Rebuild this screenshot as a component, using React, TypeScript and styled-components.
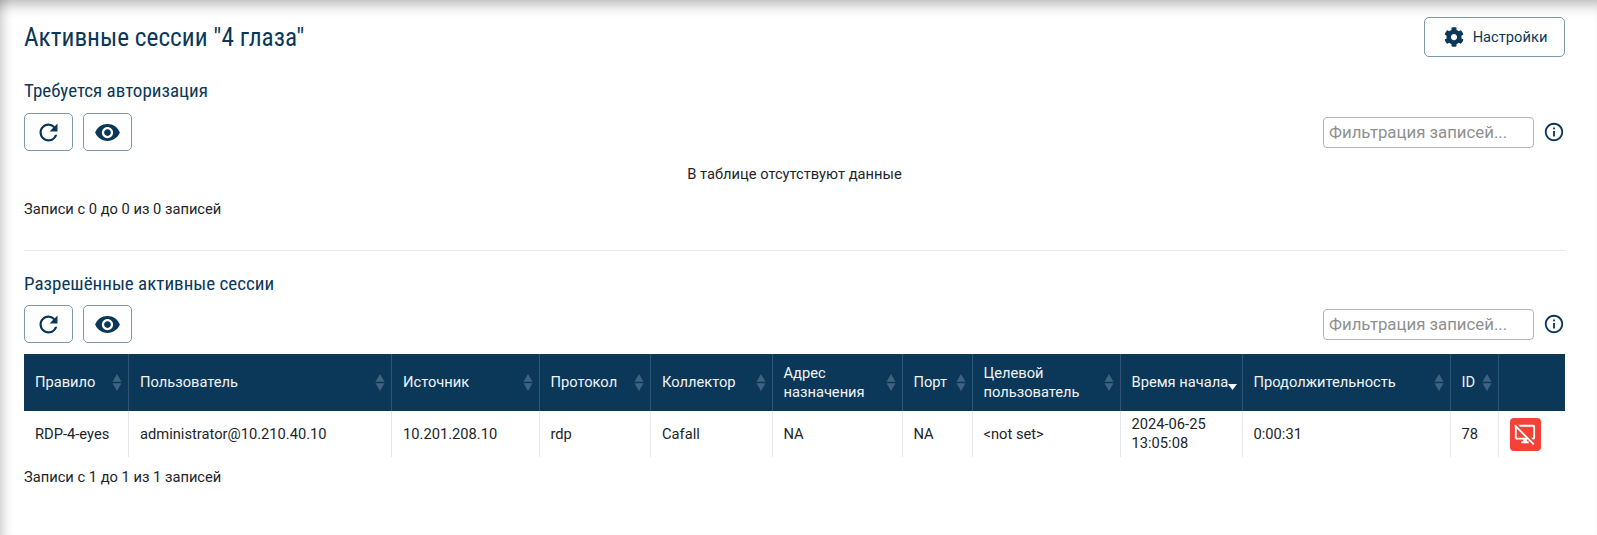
import React from 'react';
import styled, { createGlobalStyle } from 'styled-components';
import { FaCog } from 'react-icons/fa';
import {
  MdInfoOutline,
  MdOutlineDesktopAccessDisabled,
  MdRefresh,
  MdVisibility,
} from 'react-icons/md';

const navy = '#0b3859';

const GlobalStyle = createGlobalStyle`
  html, body {
    margin: 0;
    padding: 0;
    background: #fff;
  }
  body {
    font-family: Roboto, "Liberation Sans", sans-serif;
    font-size: 14.7px;
    color: #212529;
  }
`;

const Page = styled.div`
  box-sizing: border-box;
  height: 535px;
  overflow: hidden;
  padding: 17px 32px 0 24px;
  box-shadow: inset 0 15px 14px -11px rgba(0, 0, 0, 0.3),
    inset 13px 0 11px -10px rgba(0, 0, 0, 0.2);
`;

const TitleRow = styled.div`
  display: flex;
  justify-content: space-between;
  align-items: center;
  height: 40px;
`;

const Title = styled.h1`
  margin: 0;
  font-size: 25.3px;
  font-weight: 400;
  font-stretch: 75%;
  color: ${navy};
`;

const SectionTitle = styled.h2`
  margin: 0;
  height: 24px;
  line-height: 24px;
  font-size: 19px;
  font-weight: 400;
  font-stretch: 75%;
  color: ${navy};
`;

const OutlineButton = styled.button`
  display: inline-flex;
  align-items: center;
  justify-content: center;
  box-sizing: border-box;
  background: #fff;
  border: 1px solid #7d97ab;
  border-radius: 5px;
  color: ${navy};
  font-family: inherit;
  padding: 0;
`;

const IconButton = styled(OutlineButton)`
  width: 49px;
  height: 38px;
  font-size: ${(p) => p.$size}px;
`;

const SettingsButton = styled(OutlineButton)`
  width: 141px;
  height: 40px;
  gap: 9px;
  padding-left: 2px;
  font-size: 14.7px;
  svg {
    font-size: 20px;
  }
`;

const Section = styled.section`
  margin-top: ${(p) => p.$top}px;
`;

const Toolbar = styled.div`
  display: flex;
  align-items: center;
  gap: 10px;
  height: 38px;
  margin-top: ${(p) => p.$top}px;
`;

const Spacer = styled.div`
  flex: 1;
`;

const FilterInput = styled.input`
  box-sizing: border-box;
  width: 211px;
  height: 31px;
  padding: 0 5px;
  margin-right: -1px;
  border: 1px solid #b5b5b5;
  border-radius: 4px;
  font-family: inherit;
  font-size: 16.8px;
  outline: none;
  &::placeholder {
    color: #909090;
    opacity: 1;
  }
`;

const InfoIcon = styled.span`
  display: inline-flex;
  color: ${navy};
  font-size: 22px;
`;

const EmptyText = styled.div`
  height: 24px;
  line-height: 24px;
  margin-top: 11px;
  text-align: center;
`;

const Info = styled.div`
  height: 20px;
  line-height: 20px;
  margin-top: ${(p) => p.$top}px;
`;

const Divider = styled.hr`
  margin: 31px 0 0;
  border: 0;
  border-top: 1px solid #e9e9e9;
`;

const Table = styled.table`
  table-layout: fixed;
  width: 1541px;
  margin-top: 11px;
  border-collapse: collapse;
`;

const Th = styled.th`
  box-sizing: border-box;
  position: relative;
  height: 57px;
  padding: 0 ${(p) => (p.$active ? 0 : 26)}px 0 11px;
  background: ${navy};
  border-right: 1px solid #2f5674;
  color: #f0f4f7;
  font-size: 14.7px;
  font-weight: 400;
  line-height: 19px;
  text-align: left;
  &:last-child {
    border-right: 0;
  }
`;

const Td = styled.td`
  box-sizing: border-box;
  height: 46px;
  padding: 0 11px;
  border-right: 1px solid #e4e8ec;
  font-size: 14.7px;
  line-height: 19px;
  &:last-child {
    border-right: 0;
  }
`;

const SortMark = styled.svg`
  position: absolute;
  right: 6px;
  top: 20px;
  width: 10px;
  height: 17px;
  fill: #3f6280;
`;

const ActiveMark = styled.svg`
  position: absolute;
  right: 5px;
  top: 30px;
  width: 9px;
  height: 6px;
  fill: #f4f7f9;
`;

const KillButton = styled.button`
  display: flex;
  align-items: center;
  justify-content: center;
  width: 31px;
  height: 33px;
  padding: 0;
  border: 0;
  border-radius: 4px;
  background: #f44336;
  color: #fff;
  font-size: 22px;
`;

const columns = [
  { title: 'Правило', width: 104.5 },
  { title: 'Пользователь', width: 263 },
  { title: 'Источник', width: 147.5 },
  { title: 'Протокол', width: 111.5 },
  { title: 'Коллектор', width: 121.5 },
  { title: 'Адрес назначения', width: 130 },
  { title: 'Порт', width: 70 },
  { title: 'Целевой пользователь', width: 148 },
  { title: 'Время начала', width: 122, active: true },
  { title: 'Продолжительность', width: 208 },
  { title: 'ID', width: 48 },
];

const row = [
  'RDP-4-eyes',
  'administrator@10.210.40.10',
  '10.201.208.10',
  'rdp',
  'Cafall',
  'NA',
  'NA',
  '<not set>',
  '2024-06-25 13:05:08',
  '0:00:31',
  '78',
];

const Tools = ({ top }: { top: number }) => (
  <Toolbar $top={top}>
    <IconButton $size={27}>
      <MdRefresh />
    </IconButton>
    <IconButton $size={27}>
      <MdVisibility />
    </IconButton>
    <Spacer />
    <FilterInput placeholder="Фильтрация записей..." />
    <InfoIcon>
      <MdInfoOutline />
    </InfoIcon>
  </Toolbar>
);

export default function App() {
  return (
    <>
      <GlobalStyle />
      <Page>
        <TitleRow>
          <Title>Активные сессии "4 глаза"</Title>
          <SettingsButton>
            <FaCog />
            Настройки
          </SettingsButton>
        </TitleRow>

        <Section $top={22}>
          <SectionTitle>Требуется авторизация</SectionTitle>
          <Tools top={10} />
          <EmptyText>В таблице отсутствуют данные</EmptyText>
          <Info $top={13}>Записи с 0 до 0 из 0 записей</Info>
        </Section>

        <Divider />

        <Section $top={21}>
          <SectionTitle>Разрешённые активные сессии</SectionTitle>
          <Tools top={9} />
          <Table>
            <colgroup>
              {columns.map((c) => (
                <col key={c.title} style={{ width: c.width }} />
              ))}
              <col style={{ width: 67 }} />
            </colgroup>
            <thead>
              <tr>
                {columns.map((c) => (
                  <Th key={c.title} $active={c.active}>
                    {c.title}
                    {c.active ? (
                      <ActiveMark viewBox="0 0 9 6">
                        <path d="M0 0h9L4.5 6z" />
                      </ActiveMark>
                    ) : (
                      <SortMark viewBox="0 0 10 17">
                        <path d="M5 0l4.5 7.7H.5zM5 17l4.5-7.7H.5z" />
                      </SortMark>
                    )}
                  </Th>
                ))}
                <Th />
              </tr>
            </thead>
            <tbody>
              <tr>
                {row.map((v, i) => (
                  <Td key={i}>{v}</Td>
                ))}
                <Td>
                  <KillButton>
                    <MdOutlineDesktopAccessDisabled />
                  </KillButton>
                </Td>
              </tr>
            </tbody>
          </Table>
          <Info $top={10}>Записи с 1 до 1 из 1 записей</Info>
        </Section>
      </Page>
    </>
  );
}
